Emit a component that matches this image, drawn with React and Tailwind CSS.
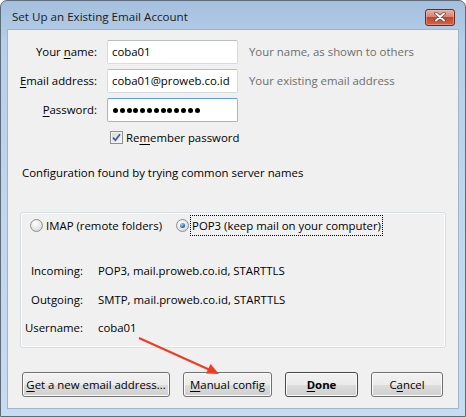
import React from "react";

function U({ children }) {
  return <span className="underline underline-offset-[2px] decoration-[1px]">{children}</span>;
}

function Btn({ w, bold, children }) {
  return (
    <div
      className={`h-[25px] ${w} rounded-[3px] border ${
        bold ? "border-[#4a4a4a] font-bold" : "border-[#707070]"
      } bg-[linear-gradient(#f2f2f2,#ebebeb_50%,#dddddd_50%,#cfcfcf)] shadow-[inset_0_0_0_1px_#fbfbfb] flex items-center justify-center text-black`}
    >
      {children}
    </div>
  );
}

function Radio({ checked }) {
  return (
    <div className="w-[13px] h-[13px] rounded-full border border-[#8e8f8f] bg-[radial-gradient(circle_at_40%_35%,#ffffff,#e2e2e2_60%,#c9c9c9)] flex items-center justify-center shrink-0">
      {checked && (
        <div className="w-[5px] h-[5px] rounded-full bg-[radial-gradient(circle_at_35%_30%,#a9d4f7,#1d5fa8_70%,#153f7a)]" />
      )}
    </div>
  );
}

export default function App() {
  return (
    <div className="w-[466px] h-[417px] relative font-['Open_Sans','Noto_Sans',sans-serif] text-[11.4px] leading-[16px] text-black">
      <div className="w-[466px] h-[417px] rounded-t-[7px] border border-[#5d6b7a] bg-[linear-gradient(#a4bfdd,#b6cfea_10%,#c0d6ed_50%,#c7dcf1)] flex flex-col">
        {/* Title bar */}
        <div className="h-[29px] flex items-center justify-between pl-[11px] pr-[10px]">
          <span className="text-[11.6px] text-[#1b1b1b] mt-[2px]">Set Up an Existing Email Account</span>
          <div className="w-[30px] h-[17px] mt-[3px] rounded-[3px] border border-[#6e2a20] bg-[linear-gradient(#eab1a3,#d9826f_45%,#c4462f_50%,#d2654a)] shadow-[inset_0_0_0_1px_#f0b9ab80] flex items-center justify-center">
            <svg width="12" height="10" viewBox="0 0 12 10">
              <path d="M2 1.5 L10 8.5 M10 1.5 L2 8.5" stroke="#5a3a36" strokeWidth="3.4" strokeLinecap="round" />
              <path d="M2 1.5 L10 8.5 M10 1.5 L2 8.5" stroke="#ffffff" strokeWidth="2" strokeLinecap="round" />
            </svg>
          </div>
        </div>

        {/* Content */}
        <div className="mx-[7px] h-[378px] bg-[#f0f0f0] shadow-[0_0_0_1px_#9fb4cb] flex flex-col">
          {/* Form */}
          <div className="pt-[10px] grid grid-cols-[89px_131px_1fr] gap-x-[10px] gap-y-[5px] items-center">
            <div className="text-right">
              Your <U>n</U>ame:
            </div>
            <div className="h-[24px] bg-white border border-[#d6dbe1] border-t-[#b9bdc4] rounded-[2px] flex items-center pl-[4px]">
              coba01
            </div>
            <div className="ml-[1px] text-[#6d6d6d]">Your name, as shown to others</div>

            <div className="text-right">
              <U>E</U>mail address:
            </div>
            <div className="h-[24px] bg-white border border-[#d6dbe1] border-t-[#b9bdc4] rounded-[2px] flex items-center pl-[4px]">
              coba01@proweb.co.id
            </div>
            <div className="ml-[1px] text-[#6d6d6d]">Your existing email address</div>

            <div className="text-right">
              <U>P</U>assword:
            </div>
            <div className="h-[24px] bg-white border border-[#8cbcec] border-t-[#5b9ee1] rounded-[2px] flex items-center pl-[5px] gap-[1.8px]">
              {Array.from({ length: 13 }).map((_, i) => (
                <span key={i} className="w-[5px] h-[5px] rounded-full bg-black" />
              ))}
            </div>
            <div />
          </div>

          {/* Remember */}
          <div className="mt-[8px] h-[15px] flex items-center pl-[102px] gap-[3px]">
            <div className="w-[13px] h-[13px] border border-[#8e8f8f] bg-[linear-gradient(135deg,#d8d8d8,#f7f7f7)] shadow-[inset_0_0_0_1px_#f4f4f4] flex items-center justify-center shrink-0">
              <svg width="9" height="9" viewBox="0 0 9 9">
                <path d="M1 4.6 L3.4 7.2 L8 1.2" fill="none" stroke="#3d5a98" strokeWidth="1.7" />
              </svg>
            </div>
            <span>
              Re<U>m</U>ember password
            </span>
          </div>

          {/* Config text */}
          <div className="mt-[20px] pl-[14px] h-[16px]">Configuration found by trying common server names</div>

          {/* Group box */}
          <div className="mt-[31px] mx-[12px] h-[136px] rounded-[3px] border border-[#d5dfe5] shadow-[inset_0_0_0_1px_#ffffff] flex flex-col">
            <div className="mt-[2px] h-[21px] flex items-center pl-[9px]">
              <Radio />
              <span className="ml-[3px]">IMAP (remote folders)</span>
              <div className="ml-[14px]">
                <Radio checked />
              </div>
              <span className="ml-[1px] h-[21px] px-[1px] border border-dotted border-black flex items-center">
                POP3 (keep mail on your computer)
              </span>
            </div>
            <div className="mt-[27px] grid grid-cols-[62px_1fr] gap-x-[15px] gap-y-[12.5px]">
              <div className="text-right h-[16px]">Incoming:</div>
              <div>POP3, mail.proweb.co.id, STARTTLS</div>
              <div className="text-right h-[16px]">Outgoing:</div>
              <div>SMTP, mail.proweb.co.id, STARTTLS</div>
              <div className="text-right h-[16px]">Username:</div>
              <div>coba01</div>
            </div>
          </div>

          {/* Buttons */}
          <div className="mt-[24px] pl-[14px] flex gap-[13px]">
            <Btn w="w-[148px]">
              <span>
                <U>G</U>et a new email address...
              </span>
            </Btn>
            <Btn w="w-[89px]">
              <span>
                <U>M</U>anual config
              </span>
            </Btn>
            <Btn w="w-[73px]" bold>
              <span>
                <U>D</U>one
              </span>
            </Btn>
            <Btn w="w-[72px]">
              <span>
                C<U>a</U>ncel
              </span>
            </Btn>
          </div>
        </div>
      </div>

      {/* Red annotation arrow */}
      <svg className="absolute left-0 top-0 pointer-events-none" width="466" height="417" viewBox="0 0 466 417">
        <line x1="139" y1="338" x2="210" y2="370" stroke="#ef3b24" strokeWidth="2" />
        <polygon points="219,374 206,373.5 210.5,364" fill="#ef3b24" />
      </svg>
    </div>
  );
}
